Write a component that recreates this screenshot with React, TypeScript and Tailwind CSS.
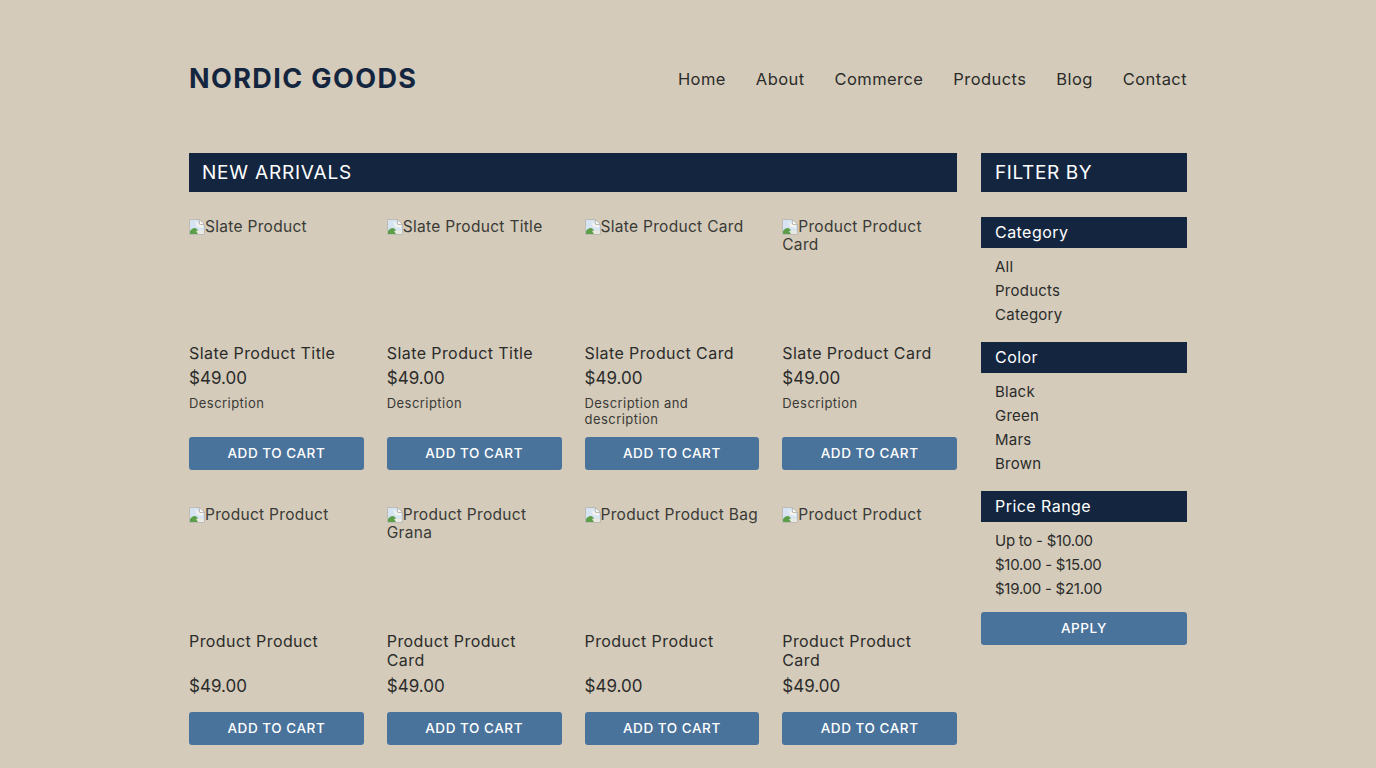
import React from 'react';

const font = { fontFamily: 'Inter, "Liberation Sans", sans-serif' };

const navLinks = ['Home', 'About', 'Commerce', 'Products', 'Blog', 'Contact'];

const topProducts = [
  { alt: 'Slate Product', title: 'Slate Product Title', desc: 'Description' },
  { alt: 'Slate Product Title', title: 'Slate Product Title', desc: 'Description' },
  { alt: 'Slate Product Card', title: 'Slate Product Card', desc: 'Description and description' },
  { alt: 'Product Product Card', title: 'Slate Product Card', desc: 'Description' },
];

const bottomProducts = [
  { alt: 'Product Product', title: 'Product Product' },
  { alt: 'Product Product Grana', title: 'Product Product Card' },
  { alt: 'Product Product Bag', title: 'Product Product' },
  { alt: 'Product Product', title: 'Product Product Card' },
];

const filters = [
  { name: 'Category', items: ['All', 'Products', 'Category'], list: 'tracking-[0.25px]' },
  { name: 'Color', items: ['Black', 'Green', 'Mars', 'Brown'], list: 'tracking-[0.25px]' },
  { name: 'Price Range', items: ['Up to - $10.00', '$10.00 - $15.00', '$19.00 - $21.00'], list: 'tracking-[-0.25px]' },
];

function BrokenImage() {
  return (
    <svg width="16" height="16" viewBox="0 0 16 16" className="inline-block align-[-3px]">
      <path d="M0.5 0.5h10l5 5v10h-15z" fill="#d5e3f2" stroke="#bdbbb3" strokeWidth="1" />
      <path d="M10.5 0.5v5h5z" fill="#f6f6f4" stroke="#bdbbb3" strokeWidth="1" />
      <path d="M6 2l5 4 3 0 0 3-6-1z" fill="#f2f2ef" />
      <path d="M1 15v-3c2-2.500 4-3.500 6-2.500 2 1 3 3.500 4 5.500z" fill="#5d9e48" />
      <path d="M9 15l-2-3 4-1 4 1v3z" fill="#e8e8e2" />
    </svg>
  );
}

function AddToCart() {
  return (
    <button className="w-full h-[33px] bg-[#4a739c] rounded-[3px] text-white text-[13.5px] font-medium tracking-[0.55px]">
      ADD TO CART
    </button>
  );
}

function Thumb({ alt }: { alt: string }) {
  return (
    <div className="h-[127px] pt-[1px] text-[15.5px] leading-[18px] text-[#3a3a36] tracking-[0.3px]">
      <BrokenImage />
      {alt}
    </div>
  );
}

export default function App() {
  return (
    <div className="h-[768px] overflow-hidden bg-[#d4cbba] text-[#2b2b2b]" style={font}>
      <div className="w-[998px] ml-[189px]">
        <header className="flex justify-between items-start pt-[62px] h-[153px]">
          <h1 className="text-[27px] leading-[33px] font-bold text-[#14263f] tracking-[1.4px]">NORDIC GOODS</h1>
          <nav className="flex gap-[30px] pt-[2px] text-[16.5px] leading-[30px] text-[#2b2b2b] tracking-[0.42px]">
            {navLinks.map(link => (
              <span key={link}>{link}</span>
            ))}
          </nav>
        </header>

        <div className="flex gap-[24px]">
          <main className="w-[768px]">
            <h2 className="h-[39px] bg-[#14263f] text-white px-[13px] text-[19px] leading-[40px] tracking-[0.8px]">
              NEW ARRIVALS
            </h2>

            <div className="grid grid-cols-4 gap-x-[23px] mt-[25px]">
              {topProducts.map((p, i) => (
                <div key={i} className="flex flex-col h-[253px]">
                  <Thumb alt={p.alt} />
                  <div className="text-[16px] leading-[19px] mb-[6px] tracking-[0.42px]">{p.title}</div>
                  <div className="text-[17px] leading-[19px] mb-[7px]">$49.00</div>
                  <div className="text-[13px] leading-[16px] text-[#3a3a36] tracking-[0.45px]">{p.desc}</div>
                  <div className="mt-auto">
                    <AddToCart />
                  </div>
                </div>
              ))}
            </div>

            <div className="grid grid-cols-4 gap-x-[23px] mt-[35px]">
              {bottomProducts.map((p, i) => (
                <div key={i} className="flex flex-col h-[240px]">
                  <Thumb alt={p.alt} />
                  <div className="h-[38px] pr-[20px] text-[16px] leading-[19px] mb-[7px] tracking-[0.42px]">{p.title}</div>
                  <div className="text-[17px] leading-[19px]">$49.00</div>
                  <div className="mt-auto">
                    <AddToCart />
                  </div>
                </div>
              ))}
            </div>
          </main>

          <aside className="w-[206px]">
            <h2 className="h-[39px] bg-[#14263f] text-white px-[14px] text-[19px] leading-[40px] tracking-[0.6px]">
              FILTER BY
            </h2>
            <div className="mt-[25px] flex flex-col gap-[15px]">
              {filters.map(f => (
                <section key={f.name}>
                  <h3 className="h-[31px] bg-[#14263f] text-white px-[14px] text-[16px] leading-[31px] tracking-[0.45px]">
                    {f.name}
                  </h3>
                  <ul className={`pt-[7px] px-[14px] text-[15px] leading-[24px] ${f.list}`}>
                    {f.items.map(item => (
                      <li key={item}>{item}</li>
                    ))}
                  </ul>
                </section>
              ))}
              <button className="-mt-[4px] w-full h-[33px] bg-[#4a739c] rounded-[3px] text-white text-[13.5px] font-medium tracking-[0.55px]">
                APPLY
              </button>
            </div>
          </aside>
        </div>
      </div>
    </div>
  );
}
